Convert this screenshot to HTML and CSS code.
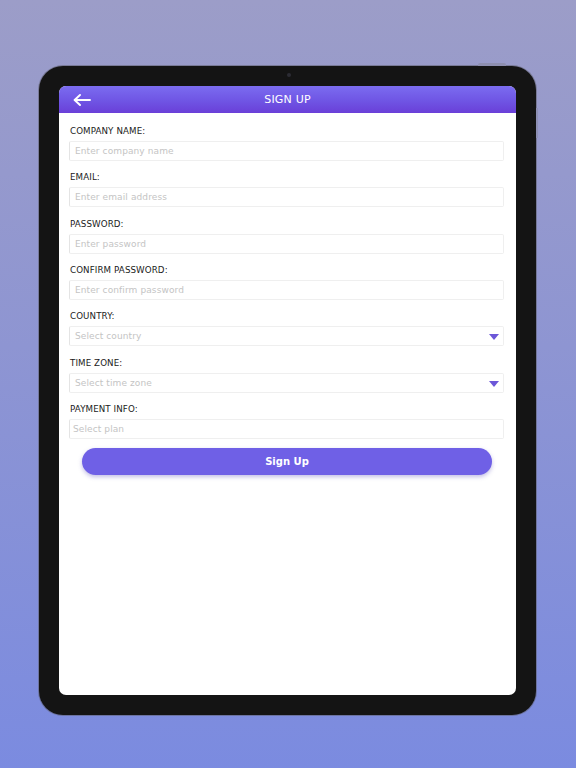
FILE: index.html
```html
<!DOCTYPE html>
<html>
<head>
<meta charset="utf-8">
<link rel="stylesheet" href="styles.css">
</head>
<body>
<div class="stage">
  <div class="device">
    <span class="camera"></span>
    <span class="btn-top"></span>
    <span class="btn-side"></span>
    <div class="screen">
      <header class="bar">
        <svg class="back" width="18" height="12" viewBox="0 0 18 12"><path d="M17 6H2M7 1L1.6 6L7 11" fill="none" stroke="#fff" stroke-width="1.9" stroke-linecap="round" stroke-linejoin="round"/></svg>
        <h1 class="title">SIGN UP</h1>
        <span></span>
      </header>
      <form class="form">
        <div class="field"><label class="label">COMPANY NAME:</label><div class="input">Enter company name</div></div>
        <div class="field"><label class="label">EMAIL:</label><div class="input">Enter email address</div></div>
        <div class="field"><label class="label">PASSWORD:</label><div class="input">Enter password</div></div>
        <div class="field"><label class="label">CONFIRM PASSWORD:</label><div class="input">Enter confirm password</div></div>
        <div class="field"><label class="label">COUNTRY:</label><div class="input select">Select country<span class="caret"></span></div></div>
        <div class="field"><label class="label">TIME ZONE:</label><div class="input select">Select time zone<span class="caret"></span></div></div>
        <div class="field"><label class="label">PAYMENT INFO:</label><div class="input plan">Select plan</div></div>
        <div class="submit-row"><div class="submit">Sign Up</div></div>
      </form>
    </div>
  </div>
</div>
</body>
</html>
```
FILE: styles.css
```css
* { box-sizing: border-box; }
html, body { margin: 0; padding: 0; }
body {
  width: 576px;
  height: 768px;
  overflow: hidden;
  background: linear-gradient(180deg, #9c9dc8 0%, #8e95d2 45%, #7b8be0 100%);
  font-family: "DejaVu Sans", "Liberation Sans", sans-serif;
}
.stage {
  padding: 66px 0 0 39px;
}
.device {
  position: relative;
  width: 497px;
  height: 649px;
  padding: 20px;
  background: #141414;
  border-radius: 24px;
  box-shadow: 0 0 0 1px rgba(90,90,100,0.5);
}
.camera {
  position: absolute;
  left: 248px;
  top: 7px;
  width: 4px;
  height: 4px;
  border-radius: 50%;
  background: #2c2c34;
}
.btn-top {
  position: absolute;
  right: 30px;
  top: -3px;
  width: 28px;
  height: 3px;
  border-radius: 2px 2px 0 0;
  background: #8e8fb0;
}
.btn-side {
  position: absolute;
  right: -2px;
  top: 42px;
  width: 2px;
  height: 30px;
  background: #8d8fb4;
}
.screen {
  width: 457px;
  height: 609px;
  background: #fff;
  border-radius: 7px;
  overflow: hidden;
}
.bar {
  height: 27px;
  display: grid;
  grid-template-columns: 1fr auto 1fr;
  align-items: center;
  padding: 0 14px;
  background: linear-gradient(180deg, #7b6cf0 0%, #6f55e4 55%, #6a3fd8 100%);
}
.back { display: block; }
.title {
  margin: 0;
  color: #fff;
  font-size: 11px;
  font-weight: 500;
  letter-spacing: 0.2px;
  font-family: "DejaVu Sans", sans-serif;
}
.form {
  margin: 0;
  padding: 11px 12px 0 10px;
  display: flex;
  flex-direction: column;
  gap: 9.33px;
}
.field {
  display: flex;
  flex-direction: column;
  gap: 3px;
}
.label {
  display: block;
  height: 14px;
  line-height: 14px;
  padding-left: 1px;
  font-size: 8.7px;
  color: #1a1a1a;
  letter-spacing: 0.1px;
}
.input {
  position: relative;
  height: 20px;
  line-height: 19px;
  padding-left: 5px;
  border: 1px solid #efefef;
  border-left-color: #e4e4e4;
  border-radius: 2px;
  font-size: 9px;
  letter-spacing: 0.1px;
  color: #c4c4c4;
}
.input.plan { padding-left: 3px; }
.caret {
  position: absolute;
  right: 4px;
  top: 7px;
  width: 0;
  height: 0;
  border-left: 5px solid transparent;
  border-right: 5px solid transparent;
  border-top: 6px solid #6c57d8;
}
.submit-row {
  padding: 0 0 0 13px;
}
.submit {
  width: 410px;
  height: 27px;
  border-radius: 14px;
  background: #6f60e6;
  color: #fff;
  font-size: 10px;
  font-weight: 700;
  letter-spacing: 0;
  text-align: center;
  line-height: 27px;
  box-shadow: 0 2px 4px rgba(80, 70, 180, 0.35);
}
```
